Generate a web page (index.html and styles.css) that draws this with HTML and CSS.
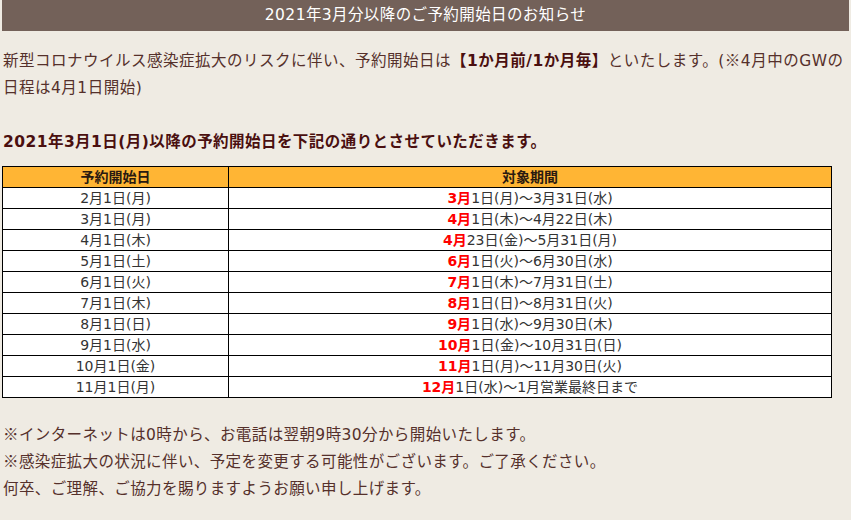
FILE: index.html
```html
<!DOCTYPE html>
<html lang="ja">
<head>
<meta charset="utf-8">
<title>2021年3月分以降のご予約開始日のお知らせ</title>
<link rel="stylesheet" href="styles.css">
</head>
<body>
<div class="page">
  <h2 class="title">2021年3月分以降のご予約開始日のお知らせ</h2>
  <p class="lead">新型コロナウイルス感染症拡大のリスクに伴い、予約開始日は<strong>【1か月前/1か月毎】</strong>といたします。(<span class="jp">※</span>4月中のGWの日程は4月1日開始)</p>
  <p class="sub">2021年3月1日(月)以降の予約開始日を下記の通りとさせていただきます。</p>
  <table class="schedule">
    <thead>
      <tr><th class="c1">予約開始日</th><th>対象期間</th></tr>
    </thead>
    <tbody>
      <tr><td>2月1日(月)</td><td><b>3月</b>1日(月)～3月31日(水)</td></tr>
      <tr><td>3月1日(月)</td><td><b>4月</b>1日(木)～4月22日(木)</td></tr>
      <tr><td>4月1日(木)</td><td><b>4月</b>23日(金)～5月31日(月)</td></tr>
      <tr><td>5月1日(土)</td><td><b>6月</b>1日(火)～6月30日(水)</td></tr>
      <tr><td>6月1日(火)</td><td><b>7月</b>1日(木)～7月31日(土)</td></tr>
      <tr><td>7月1日(木)</td><td><b>8月</b>1日(日)～8月31日(火)</td></tr>
      <tr><td>8月1日(日)</td><td><b>9月</b>1日(水)～9月30日(木)</td></tr>
      <tr><td>9月1日(水)</td><td><b>10月</b>1日(金)～10月31日(日)</td></tr>
      <tr><td>10月1日(金)</td><td><b>11月</b>1日(月)～11月30日(火)</td></tr>
      <tr><td>11月1日(月)</td><td><b>12月</b>1日(水)～1月営業最終日まで</td></tr>
    </tbody>
  </table>
  <p class="notes"><span class="jp">※</span>インターネットは0時から、お電話は翌朝9時30分から開始いたします。<br><span class="jp">※</span>感染症拡大の状況に伴い、予定を変更する可能性がございます。ご了承ください。<br>何卒、ご理解、ご協力を賜りますようお願い申し上げます。</p>
</div>
</body>
</html>
```

FILE: styles.css
```css
html, body {
  margin: 0;
  padding: 0;
  background: #efebe3;
}
body {
  font-family: "DejaVu Sans", "Noto Sans CJK JP", sans-serif;
  color: #55302b;
}
.jp {
  font-family: "Noto Sans CJK JP", sans-serif;
  line-height: 1;
}
.page {
  padding: 0 2px 0 2px;
  width: 847px;
}
.title {
  margin: 0;
  background: #736159;
  color: #ffffff;
  font-weight: normal;
  font-size: 15.5px;
  letter-spacing: 0.4px;
  line-height: 31px;
  height: 31px;
  text-align: center;
}
.lead {
  margin: 17px 0 0 1px;
  font-size: 15.5px;
  letter-spacing: 0.5px;
  line-height: 27px;
}
.lead strong {
  color: #4a0f0f;
}
.sub {
  margin: 27px 0 0 1px;
  font-size: 15.5px;
  letter-spacing: 0.45px;
  line-height: 27px;
  font-weight: bold;
  color: #4a0f0f;
}
.schedule {
  margin-top: 10px;
  width: 830px;
  border-collapse: collapse;
  font-size: 14px;
  color: #333333;
}
.schedule th, .schedule td {
  border: 1px solid #000;
  padding: 0;
  height: 20px;
  line-height: 20px;
  text-align: center;
}
.schedule th {
  background: #ffb534;
  font-weight: bold;
  color: #2a1a10;
}
.schedule .c1 {
  width: 225px;
}
.schedule td {
  background: #ffffff;
}
.schedule td b {
  color: #ff0000;
}
.notes {
  margin: 24px 0 0 1px;
  font-size: 15.5px;
  letter-spacing: 0.4px;
  line-height: 27px;
}
```
